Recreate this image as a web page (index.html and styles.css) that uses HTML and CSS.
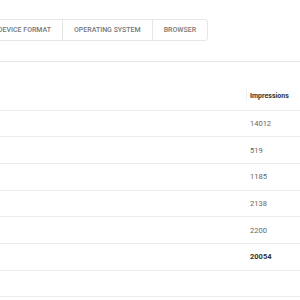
FILE: index.html
```html
<!DOCTYPE html>
<html lang="en">
<head>
    <meta charset="UTF-8">
    <meta name="viewport" content="width=device-width, initial-scale=1.0">
    <title>Impressions report</title>
    <link rel="stylesheet" href="styles.css">
</head>
<body>

    <!-- tab switcher -->
    <div class="tabs-wrap">
        <div class="tabs">
            <a href="#" class="tab">DEVICE FORMAT</a>
            <a href="#" class="tab">OPERATING SYSTEM</a>
            <a href="#" class="tab">BROWSER</a>
        </div>
    </div>

    <div class="divider"></div>

    <!-- report table -->
    <div class="report">
        <div class="row head">
            <div class="cell name"></div>
            <div class="cell value"><span class="sep"></span>Impressions</div>
        </div>
        <div class="row">
            <div class="cell name"></div>
            <div class="cell value">14012</div>
        </div>
        <div class="row">
            <div class="cell name"></div>
            <div class="cell value">519</div>
        </div>
        <div class="row">
            <div class="cell name"></div>
            <div class="cell value">1185</div>
        </div>
        <div class="row">
            <div class="cell name"></div>
            <div class="cell value">2138</div>
        </div>
        <div class="row">
            <div class="cell name"></div>
            <div class="cell value">2200</div>
        </div>
        <div class="row total">
            <div class="cell name"></div>
            <div class="cell value">20054</div>
        </div>
        <div class="row">
            <div class="cell name"></div>
            <div class="cell value"></div>
        </div>
    </div>

</body>
</html>
```

FILE: styles.css
```css
body, html {
    margin: 0;
    padding: 0;
    font-family: Roboto, "Liberation Sans", sans-serif;
    background-color: #fff;
    color: #666;
    overflow: hidden;
}

/* tabs */
.tabs-wrap {
    padding-top: 19px;
}

.tabs {
    display: flex;
    width: max-content;
    margin-left: -14px;
    border: 1px solid #e6e6e6;
    border-radius: 3px;
    height: 20px;
}

.tab {
    display: flex;
    align-items: center;
    padding: 0 11px;
    font-size: 7px;
    font-weight: 500;
    color: #777;
    text-decoration: none;
    border-left: 1px solid #e6e6e6;
}

.tab:first-child {
    border-left: none;
}

.divider {
    margin-top: 20px;
    border-top: 1px solid #e6e6e6;
}

/* table */
.report {
    margin-top: 22px;
}

.row {
    display: flex;
    height: 25.67px;
    border-bottom: 1px solid #ececec;
    font-size: 7.5px;
}

.cell {
    display: flex;
    align-items: center;
}

.name {
    flex: 1;
}

.value {
    width: 50px;
    padding-left: 4.5px;
    position: relative;
}

.head .value {
    font-size: 7px;
    font-weight: bold;
    color: #333;
    padding-bottom: 2px;
}

.sep {
    position: absolute;
    left: 0;
    top: 5px;
    bottom: 9px;
    border-left: 1px solid #eee;
}

.total .value {
    font-weight: bold;
    color: #333;
}
```
